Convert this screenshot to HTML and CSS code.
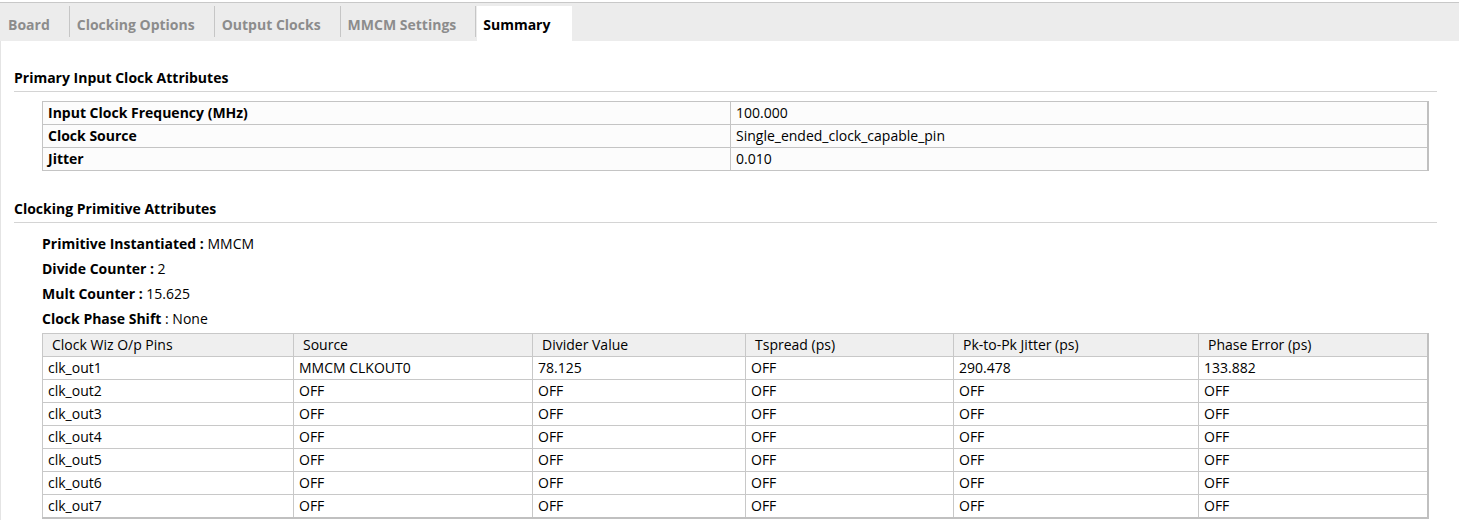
FILE: index.html
```html
<!DOCTYPE html>
<html>
<head>
<meta charset="utf-8">
<link rel="stylesheet" href="styles.css">
</head>
<body>
<div class="app">
  <div class="tabbar">
    <div class="tab"><span class="tab-label first">Board</span></div>
    <div class="tab"><span class="tab-label">Clocking Options</span></div>
    <div class="tab"><span class="tab-label">Output Clocks</span></div>
    <div class="tab"><span class="tab-label">MMCM Settings</span></div>
    <div class="tab active"><span class="tab-label">Summary</span></div>
  </div>
  <div class="content">
    <div class="section-title">Primary Input Clock Attributes</div>
    <table class="attr-table">
      <colgroup><col class="attr-key"><col class="attr-val"></colgroup>
      <tr><td class="key">Input Clock Frequency (MHz)</td><td>100.000</td></tr>
      <tr><td class="key">Clock Source</td><td>Single_ended_clock_capable_pin</td></tr>
      <tr><td class="key">Jitter</td><td>0.010</td></tr>
    </table>

    <div class="section-title second">Clocking Primitive Attributes</div>
    <div class="props">
      <div class="prop"><b>Primitive Instantiated :</b> MMCM</div>
      <div class="prop"><b>Divide Counter :</b> 2</div>
      <div class="prop"><b>Mult Counter :</b> 15.625</div>
      <div class="prop"><b>Clock Phase Shift</b> : None</div>
    </div>
    <table class="clk-table">
      <colgroup>
        <col class="w1"><col class="w2"><col class="w3"><col class="w4"><col class="w5"><col class="w6">
      </colgroup>
      <thead>
        <tr><th>Clock Wiz O/p Pins</th><th>Source</th><th>Divider Value</th><th>Tspread (ps)</th><th>Pk-to-Pk Jitter (ps)</th><th>Phase Error (ps)</th></tr>
      </thead>
      <tbody>
        <tr><td>clk_out1</td><td>MMCM CLKOUT0</td><td>78.125</td><td>OFF</td><td>290.478</td><td>133.882</td></tr>
        <tr><td>clk_out2</td><td>OFF</td><td>OFF</td><td>OFF</td><td>OFF</td><td>OFF</td></tr>
        <tr><td>clk_out3</td><td>OFF</td><td>OFF</td><td>OFF</td><td>OFF</td><td>OFF</td></tr>
        <tr><td>clk_out4</td><td>OFF</td><td>OFF</td><td>OFF</td><td>OFF</td><td>OFF</td></tr>
        <tr><td>clk_out5</td><td>OFF</td><td>OFF</td><td>OFF</td><td>OFF</td><td>OFF</td></tr>
        <tr><td>clk_out6</td><td>OFF</td><td>OFF</td><td>OFF</td><td>OFF</td><td>OFF</td></tr>
        <tr><td>clk_out7</td><td>OFF</td><td>OFF</td><td>OFF</td><td>OFF</td><td>OFF</td></tr>
      </tbody>
    </table>
  </div>
</div>
</body>
</html>
```
FILE: styles.css
```css
html, body {
  margin: 0;
  padding: 0;
  background: #ffffff;
}
body {
  font-family: "Open Sans", "Noto Sans", "Liberation Sans", sans-serif;
  font-size: 14px;
  color: #000;
  width: 1459px;
  height: 520px;
  overflow: hidden;
}
.app {
  border-left: 1px solid #e4e4e4;
  height: 520px;
  box-sizing: border-box;
}
.tabbar {
  margin-top: 2px;
  border-top: 1px solid #c8c8c8;
  height: 38px;
  background: #ececec;
  display: flex;
  align-items: flex-end;
  margin-left: -1px;
}
.tab {
  height: 35px;
  display: flex;
  align-items: flex-start;
}
.tab-label {
  height: 31px;
  box-sizing: border-box;
  padding: 6px 19px 0 7px;
  border-left: 1px solid #c6c6c6;
  display: flex;
  align-items: center;
  font-weight: 700;
  color: #8c8c8c;
  white-space: nowrap;
}
.tab-label.first {
  border-left: 1px solid transparent;
  padding-left: 7px;
}
.tab.active {
  background: linear-gradient(to right, #ececec 0, #ececec 2px, #ffffff 2px);
}
.tab.active .tab-label {
  color: #000;
  padding-right: 22px;
}
.content {
  padding: 0 22px 0 13px;
}
.section-title {
  margin-top: 27px;
  line-height: 20px;
  padding-bottom: 3px;
  border-bottom: 1px solid #d4d4d4;
  font-weight: 700;
}
.section-title.second {
  margin-top: 28px;
}
.attr-table {
  margin: 9px 9px 0 28px;
  width: 1387px;
  border-collapse: collapse;
  table-layout: fixed;
  background: #fcfcfc;
  border: 1px solid #c0c0c0;
  border-right-width: 2px;
}
.attr-key { width: 688px; }
.attr-table td {
  height: 22px;
  padding: 0 0 0 5px;
  border: 1px solid #c4c4c4;
  white-space: nowrap;
  line-height: 20px;
}
.attr-table td.key {
  font-weight: 700;
}
.props {
  margin: 8px 0 0 28px;
}
.prop {
  line-height: 25px;
  white-space: nowrap;
}
.prop b {
  font-weight: 700;
}
.clk-table {
  margin: 2px 9px 0 28px;
  width: 1387px;
  border-collapse: collapse;
  table-layout: fixed;
  border: 1px solid #c0c0c0;
  border-right-width: 2px;
  border-bottom-width: 2px;
}
.w1 { width: 251px; }
.w2 { width: 239px; }
.w3 { width: 213px; }
.w4 { width: 208px; }
.w5 { width: 245px; }
.clk-table th {
  height: 22px;
  background: #efefef;
  font-weight: 400;
  text-align: left;
  padding: 0 0 0 9px;
  border: 1px solid #c8c8c8;
  white-space: nowrap;
  line-height: 20px;
}
.clk-table td {
  height: 22px;
  padding: 0 0 0 5px;
  border: 1px solid #c8c8c8;
  white-space: nowrap;
  background: #ffffff;
  line-height: 20px;
}
```
